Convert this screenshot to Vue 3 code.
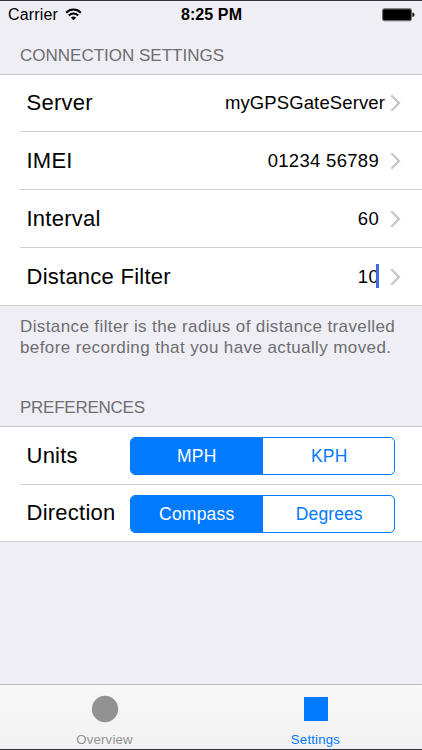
<script setup>
const connection = [
  { label: 'Server', value: 'myGPSGateServer', wide: true },
  { label: 'IMEI', value: '01234 56789' },
  { label: 'Interval', value: '60' },
  { label: 'Distance Filter', value: '10', editing: true },
]
const preferences = [
  { label: 'Units', options: ['MPH', 'KPH'] },
  { label: 'Direction', options: ['Compass', 'Degrees'] },
]
</script>

<template>
  <div class="screen">
    <header class="status">
      <div class="carrier">
        <span>Carrier</span>
        <svg class="wifi" width="17" height="13" viewBox="0 0 17 13">
          <path d="M1.2 4.7A10.2 10.2 0 0 1 15.8 4.7" fill="none" stroke="#000" stroke-width="2" />
          <path d="M3.8 7.5A6.6 6.6 0 0 1 13.2 7.5" fill="none" stroke="#000" stroke-width="1.9" />
          <path d="M8.5 12.3L5.9 9.7A3.7 3.7 0 0 1 11.1 9.7Z" fill="#000" />
        </svg>
      </div>
      <strong class="time">8:25 PM</strong>
      <svg class="battery" width="33" height="14" viewBox="0 0 33 14">
        <rect x=".6" y=".9" width="28.8" height="11.7" rx="1.8" fill="#000" stroke="#66656a" stroke-width="1.1" />
        <path d="M30.4 4.6Q32.6 5 32.6 6.8T30.4 9Z" fill="#111" />
      </svg>
    </header>

    <h2 class="heading first">CONNECTION SETTINGS</h2>
    <section class="group connection">
      <div v-for="row in connection" :key="row.label" class="row">
        <span class="label">{{ row.label }}</span>
        <span class="value" :class="{ wide: row.wide }">{{ row.value }}<i v-if="row.editing" class="caret" /></span>
        <svg class="chevron" width="11" height="18" viewBox="0 0 11 18">
          <path d="M1.3 1.3L9 9L1.3 16.7" fill="none" stroke="#c7c7cc" stroke-width="2.3" />
        </svg>
      </div>
    </section>
    <p class="note">Distance filter is the radius of distance travelled<br />before recording that you have actually moved.</p>

    <h2 class="heading second">PREFERENCES</h2>
    <section class="group preferences">
      <div v-for="row in preferences" :key="row.label" class="row">
        <span class="label">{{ row.label }}</span>
        <div class="segmented">
          <span v-for="(option, i) in row.options" :key="option" class="segment" :class="{ on: i === 0 }">{{ option }}</span>
        </div>
      </div>
    </section>

    <nav class="tabs">
      <div class="tab">
        <svg width="28" height="28" viewBox="0 0 28 28"><circle cx="14" cy="14" r="13.2" fill="#929292" /></svg>
        <span>Overview</span>
      </div>
      <div class="tab active">
        <svg width="28" height="28" viewBox="0 0 28 28"><rect x="2" y="2" width="24" height="24" fill="#007aff" /></svg>
        <span>Settings</span>
      </div>
    </nav>
  </div>
</template>

<style>
body { margin: 0; }
</style>

<style scoped>
.screen {
  box-sizing: border-box;
  width: 422px;
  height: 750px;
  display: flex;
  flex-direction: column;
  border-top: 1px solid #36343c;
  border-bottom: 1px solid #36343c;
  background: #efeef4;
  color: #000;
  font-family: "Liberation Sans", Arial, sans-serif;
  overflow: hidden;
}
.status {
  display: grid;
  grid-template-columns: 1fr auto 1fr;
  align-items: center;
  height: 27px;
  padding: 0 7px 0 8px;
  font-size: 16px;
}
.carrier { display: flex; align-items: center; gap: 7px; letter-spacing: .15px; }
.time { font-size: 16px; letter-spacing: .1px; }
.battery { justify-self: end; }
.heading {
  margin: 0;
  padding-left: 20px;
  color: #6d6d72;
  font-size: 17px;
  font-weight: 400;
  line-height: 20px;
  white-space: nowrap;
}
.first { padding-top: 18px; height: 28px; }
.second { padding-top: 40px; height: 28px; letter-spacing: -.25px; }
.group {
  display: flex;
  flex-direction: column;
  border-top: 1px solid #c8c7cc;
  border-bottom: 1px solid #d0cfd4;
  background: #fff;
}
.row {
  display: flex;
  align-items: center;
  height: 57px;
  margin-left: 20px;
  padding: 0 21px 0 6.5px;
}
.row + .row { border-top: 1px solid #d0cfd4; }
.connection .row:first-child { height: 56px; }
.preferences .row:last-child { height: 56px; }
.label { flex: 1; font-size: 22px; letter-spacing: .25px; white-space: nowrap; }
.value {
  position: relative;
  margin-right: 11px;
  font-size: 18.5px;
  letter-spacing: .3px;
  white-space: nowrap;
}
.value.wide { margin-right: 5px; letter-spacing: .12px; }
.caret {
  position: absolute;
  right: 0;
  top: -2px;
  width: 3px;
  height: 24px;
  background: #4068e0;
}
.note {
  margin: 0;
  padding: 10px 0 0 20px;
  color: #6d6d72;
  font-size: 17px;
  letter-spacing: .39px;
  line-height: 21px;
  white-space: nowrap;
}
.segmented {
  box-sizing: border-box;
  display: grid;
  grid-template-columns: 1fr 1fr;
  width: 265px;
  height: 38px;
  margin: 1px 6px 0 0;
  border: 1.4px solid #007aff;
  border-radius: 5px;
  overflow: hidden;
}
.preferences .row:last-child .segmented { margin-top: 2px; }
.segment {
  display: flex;
  align-items: center;
  justify-content: center;
  padding-left: 2px;
  color: #007aff;
  font-size: 17.5px;
  letter-spacing: .1px;
}
.segment.on { padding-left: 0; background: #007aff; color: #fff; letter-spacing: .2px; }
.tabs {
  display: grid;
  grid-template-columns: 1fr 1fr;
  margin-top: auto;
  height: 64px;
  border-top: 1px solid #b9b8bd;
  background: linear-gradient(#f8f8f8, #f1f1f2);
}
.tab {
  display: flex;
  flex-direction: column;
  align-items: center;
  padding: 10px 2px 0 0;
  color: #929292;
  font-size: 13.2px;
  letter-spacing: .2px;
}
.tab span { margin-top: 9px; line-height: 15px; }
.tab.active { color: #007aff; }
</style>
